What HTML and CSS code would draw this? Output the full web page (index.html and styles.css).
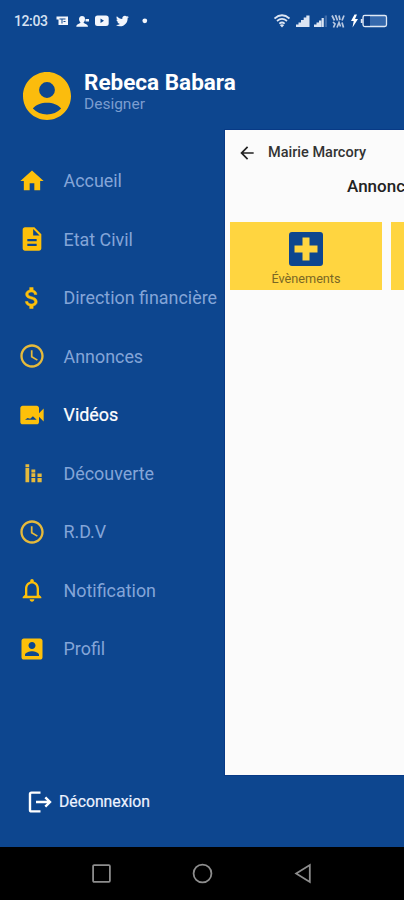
FILE: index.html
```html
<!DOCTYPE html>
<html lang="fr">
<head>
<meta charset="utf-8">
<title>Mairie Marcory</title>
<link rel="stylesheet" href="styles.css">
</head>
<body>
<div class="screen">
  <header class="status">
    <span class="time">12:03</span>
    <svg class="notifs" width="94" height="16" viewBox="0 0 94 16" fill="#f3f6fc">
      <path fill-rule="evenodd" d="M1.500 3.500H13V12H3.500V6.500h-2zM4.500 5.500v1h2v4h1v-4h3v-1zM8.500 8v1h2V8z"/>
      <path d="M27 3c2 0 3 1.200 3 3s-.8 2.800-1.500 3.500c.5 1.500 4.500 1.200 4.500 4.300H21.300c0-3.100 3.700-2.800 4.200-4.300C24.700 8.800 24 7.500 24 6s1-3 3-3zM30.500 6h3.500v2.500h-3.500z"/>
      <path fill-rule="evenodd" d="M42.500 2.500H51q2.700 0 2.700 2.500v5.500q0 2.500-2.700 2.500h-8.500q-2.500 0-2.500-2.500V5q0-2.500 2.500-2.500zM45.500 5.500v4.400l3.500-2.200z"/>
      <path transform="translate(60 .2) scale(.62)" d="M22.460 6c-.77.350-1.600.580-2.460.690.880-.530 1.560-1.370 1.880-2.380-.83.500-1.750.850-2.720 1.050C18.370 4.500 17.260 4 16 4c-2.350 0-4.270 1.920-4.270 4.290 0 .340.040.670.110.980C8.280 9.090 5.110 7.380 3 4.790c-.37.630-.58 1.370-.58 2.150 0 1.490.750 2.810 1.910 3.560-.71 0-1.370-.2-1.950-.5v.03c0 2.080 1.480 3.820 3.440 4.210a4.220 4.220 0 0 1-1.930.07 4.280 4.280 0 0 0 4 2.980 8.521 8.521 0 0 1-5.330 1.840c-.34 0-.68-.02-1.020-.06C3.440 20.290 5.700 21 8.120 21 16 21 20.330 14.460 20.330 8.790c0-.19 0-.37-.01-.56.840-.6 1.560-1.360 2.140-2.230z"/>
      <circle cx="89.800" cy="7.800" r="2.400"/>
    </svg>
    <svg class="signals" width="116" height="18" viewBox="0 0 116 18" fill="#dce5f3">
      <g fill="none" stroke="#dce5f3" stroke-width="1.700"><path d="M.5 6.500q7.500-6.500 15 0M3 9q5-4.200 10 0M5.300 11.600q2.700-2.200 5.400 0"/></g>
      <path d="M5.800 13q2.200-1.500 4.400 0L8 15.500z"/>
      <path d="M22 12.500h2.600V15H22zM24.500 10.500h2.700V15h-2.700zM27 8h2.800v7H27zM29.700 5.500h2.700V15h-2.700zM32.300 3.500H35.500V15h-3.200z"/>
      <path d="M40 12.500h2.600V15H40zM42.500 10.500h2.700V15h-2.700zM45 8.500h2.300V15H45zM47.600 6h2.200v9h-2.200z"/>
      <path fill="#3e6ba9" d="M50.700 3.500H53V15h-2.300z"/>
      <g fill="none" stroke="#b9c9e1" stroke-width="1.700"><path d="M58 3.500l2.500 5M61.500 3l2 5.500M65 3.500l1 4.500M70 3.500l-2 5M59 10l2 2-1.500 3.500M63 15.500l2-5 1.500 4M68 10.500l1.500 5"/></g>
      <path fill="#fff" d="M80.500 2.500L77 9h2.700L78.500 15.500l5.500-8.500h-3l2-4.500z"/>
      <rect x="89" y="3.500" width="23.500" height="11" rx="1.800" fill="#3569ad" stroke="#e0e9f5" stroke-width="1.300"/>
      <path fill="#0b3c82" d="M90 4.300h6v9.400h-6z"/><path d="M86.800 7h1.800v4h-1.800z"/>
    </svg>
  </header>

  <section class="profile">
    <svg class="avatar" viewBox="2 2 20 20"><path d="M12 2C6.480 2 2 6.480 2 12s4.480 10 10 10 10-4.480 10-10S17.520 2 12 2zm0 4.200a3.300 3.300 0 1 1 0 6.600 3.300 3.300 0 0 1 0-6.600zM12 19.700c-2.300 0-4.400-.9-5.900-2.500C7.300 15.600 9.700 14.800 12 14.800s4.700.8 5.900 2.400c-1.500 1.600-3.600 2.500-5.900 2.500z"/></svg>
    <div>
      <h1 class="name">Rebeca Babara</h1>
      <p class="role">Designer</p>
    </div>
  </section>

  <main class="body">
    <nav class="menu">
      <a class="item"><svg class="icon" viewBox="0 0 24 24"><path d="M10 20v-6h4v6h5v-8h3L12 3 2 12h3v8z"/></svg><span>Accueil</span></a>
      <a class="item"><svg class="icon" viewBox="0 0 24 24"><path d="M14 2H6c-1.100 0-2 .9-2 2v16c0 1.100.9 2 2 2h12c1.100 0 2-.9 2-2V8l-6-6zm2 16H8v-2h8v2zm0-4H8v-2h8v2zm-3-5V3.500L18.500 9H13z"/></svg><span>Etat Civil</span></a>
      <a class="item"><svg class="icon" viewBox="0 0 24 24"><path stroke="#fdc00a" stroke-width=".4" d="M11.800 10.900c-2.270-.59-3-1.200-3-2.150 0-1.090 1.010-1.850 2.700-1.850 1.780 0 2.440.85 2.500 2.100h2.210c-.07-1.720-1.120-3.300-3.210-3.810V3h-3v2.160c-1.940.42-3.500 1.680-3.500 3.610 0 2.310 1.910 3.460 4.700 4.130 2.500.6 3 1.480 3 2.410 0 .69-.49 1.790-2.700 1.790-2.060 0-2.870-.92-2.980-2.100h-2.200c.12 2.190 1.760 3.420 3.680 3.830V21h3v-2.150c1.950-.37 3.500-1.500 3.500-3.550 0-2.840-2.430-3.810-4.700-4.400z"/></svg><span>Direction financière</span></a>
      <a class="item"><svg class="icon soft" viewBox="0 0 24 24"><path d="M11.990 2C6.470 2 2 6.480 2 12s4.470 10 9.990 10C17.520 22 22 17.520 22 12S17.520 2 11.990 2zM12 20c-4.420 0-8-3.580-8-8s3.580-8 8-8 8 3.580 8 8-3.580 8-8 8zm.5-13H11v6l5.250 3.150.75-1.230-4.500-2.670z"/></svg><span>Annonces</span></a>
      <a class="item active"><svg class="icon" viewBox="0 0 24 24"><path d="M18 10.480V6c0-1.100-.9-2-2-2H4c-1.100 0-2 .9-2 2v12c0 1.100.9 2 2 2h12c1.100 0 2-.9 2-2v-4.480l4 3.980v-11l-4 3.980zM6 16l2.200-1.400 2.200.6 2.400-2.200 3.200 3z"/></svg><span>Vidéos</span></a>
      <a class="item"><svg class="icon soft" viewBox="0 0 24 24"><path fill-rule="evenodd" d="M6.400 4.500h3.200V20H6.400zM11.500 9h3.300v11h-3.300zM16.700 12.500H20.300V20h-3.600zM6.400 7v.8h3.200V7zM11.500 11.500v.8h3.300v-.8zM11.500 15.500v.8h3.300v-.8zM16.700 15.500v.8h3.600v-.8z"/></svg><span>Découverte</span></a>
      <a class="item"><svg class="icon soft" viewBox="0 0 24 24"><path d="M11.990 2C6.470 2 2 6.480 2 12s4.470 10 9.990 10C17.520 22 22 17.520 22 12S17.520 2 11.990 2zM12 20c-4.420 0-8-3.580-8-8s3.580-8 8-8 8 3.580 8 8-3.580 8-8 8zm.5-13H11v6l5.250 3.150.75-1.230-4.500-2.670z"/></svg><span>R.D.V</span></a>
      <a class="item"><svg class="icon" viewBox="0 0 24 24"><path d="M12 22c1.100 0 2-.9 2-2h-4c0 1.100.9 2 2 2zm6-6v-5c0-3.070-1.630-5.640-4.500-6.320V4c0-.83-.67-1.500-1.500-1.500s-1.500.67-1.500 1.500v.68C7.640 5.360 6 7.920 6 11v5l-2 2v1h16v-1l-2-2zm-2 1H8v-6c0-2.480 1.510-4.500 4-4.500s4 2.020 4 4.500v6z"/></svg><span>Notification</span></a>
      <a class="item"><svg class="icon" viewBox="0 0 24 24"><path d="M3 5v14c0 1.100.89 2 2 2h14c1.100 0 2-.9 2-2V5c0-1.100-.9-2-2-2H5c-1.110 0-2 .9-2 2zm12 4c0 1.660-1.340 3-3 3s-3-1.340-3-3 1.340-3 3-3 3 1.340 3 3zm-9 8c0-2 4-3.100 6-3.100s6 1.100 6 3.100v1H6v-1z"/></svg><span>Profil</span></a>
    </nav>

    <section class="panel">
      <div class="bar">
        <svg class="back" viewBox="0 0 24 24"><path d="M20 11H7.830l5.590-5.590L12 4l-8 8 8 8 1.410-1.410L7.830 13H20v-2z"/></svg>
        <span class="bar-title">Mairie Marcory</span>
      </div>
      <h2 class="heading">Annonces</h2>
      <div class="cards">
        <div class="card">
          <svg class="plus" viewBox="0 0 34 34"><path fill-rule="evenodd" d="M3 0h28q3 0 3 3v28q0 3-3 3H3q-3 0-3-3V3q0-3 3-3zM13.500 5.500v8h-8v7h8v8h7v-8h8v-7h-8v-8z"/></svg>
          <span class="card-label">Évènements</span>
        </div>
        <div class="card"></div>
      </div>
    </section>
  </main>

  <footer class="logout">
    <svg width="24" height="22" viewBox="0 0 24 22" fill="none" stroke="#fff" stroke-width="2.400"><path d="M12.500 1.600H3.500q-1.500 0-1.500 1.500v15.800q0 1.500 1.500 1.500h9M8 11h14M17.300 6.300L22 11l-4.700 4.700"/></svg>
    <span>Déconnexion</span>
  </footer>

  <div class="navbar">
    <svg viewBox="0 0 20 20"><rect x="2" y="2" width="16" height="16" rx="1"/></svg>
    <svg viewBox="0 0 20 20"><circle cx="10" cy="10" r="8.500"/></svg>
    <svg viewBox="0 0 20 20"><path d="M16 2v16L3 10z"/></svg>
  </div>
</div>
</body>
</html>
```
FILE: styles.css
```css
* { box-sizing: border-box; }
body { margin: 0; font-family: Roboto, sans-serif; background: #0d468f; }
h1, h2, p { margin: 0; }
svg { display: block; flex: none; }

.screen { width: 404px; height: 900px; display: flex; flex-direction: column; overflow: hidden; background: #0d468f; }

.status { height: 42px; flex: none; display: flex; align-items: center; padding: 0 14px 0 14px; }
.time { width: 41px; font-size: 14px; line-height: 16px; font-weight: 500; letter-spacing: -0.4px; color: #d6e1f2; white-space: nowrap; }
.signals { margin-left: auto; }

.profile { height: 88px; flex: none; display: flex; align-items: flex-start; padding: 27px 0 0 23px; gap: 13px; }
.avatar { width: 48px; height: 48px; margin-top: 3px; fill: #fbbc0d; }
.name { font-size: 22.500px; line-height: 26px; font-weight: 700; color: #fff; white-space: nowrap; }
.role { font-size: 15.500px; line-height: 18px; color: #7b9dd0; }

.body { height: 645px; flex: none; display: flex; }
.menu { width: 225px; flex: none; padding-top: 21.500px; display: flex; flex-direction: column; }
.item { height: 58.500px; flex: none; display: flex; align-items: center; gap: 17.500px; padding-left: 18px; font-size: 17.900px; color: #84a5d8; white-space: nowrap; }
.item.active { color: #fff; -webkit-text-stroke: 0.2px #fff; }
.icon { width: 28px; height: 28px; fill: #fdc00a; }
.icon.soft { fill: #e5ba3c; }

.panel { flex: 1; min-width: 0; overflow: hidden; background: #fbfbfb; box-shadow: 0 0 0 1px #083a86; }
.bar { height: 45px; display: flex; align-items: center; padding-left: 12px; gap: 11px; }
.back { width: 20px; height: 20px; fill: #222; }
.bar-title { font-size: 14.500px; font-weight: 500; color: #333; white-space: nowrap; }
.heading { height: 22px; padding-left: 122px; font-size: 17px; line-height: 22px; font-weight: 500; color: #222; white-space: nowrap; }
.cards { display: flex; gap: 9px; padding: 25px 0 0 5px; }
.card { width: 152px; height: 68px; flex: none; display: flex; flex-direction: column; align-items: center; padding-top: 10px; background: #ffd540; }
.plus { width: 34px; height: 34px; fill: #0d468f; }
.card-label { margin-top: 5px; font-size: 12.700px; line-height: 15px; color: #796725; }

.logout { flex: 1; display: flex; align-items: center; padding: 0 0 19px 28px; gap: 7px; font-size: 15.750px; color: #edf3ff; -webkit-text-stroke: 0.2px #edf3ff; }

.navbar { height: 53px; flex: none; display: flex; justify-content: center; gap: 80px; align-items: center; background: #000; }
.navbar svg { width: 21px; height: 21px; fill: none; stroke: #8d8d8d; stroke-width: 1.700; }
```
